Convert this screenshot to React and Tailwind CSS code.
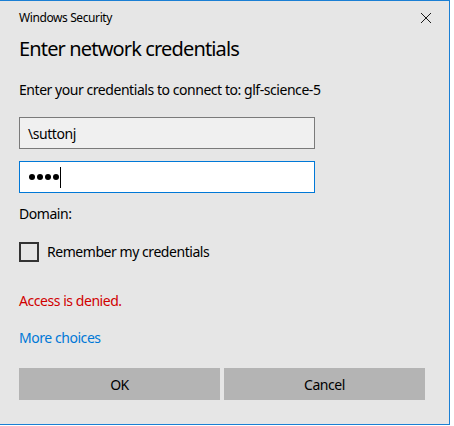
import React from 'react';

const font = { fontFamily: '"Noto Sans", "Open Sans", sans-serif' };

const CloseIcon = () => (
  <svg width="12" height="12" viewBox="0 0 12 12" className="block">
    <path d="M1 1 L11 11 M11 1 L1 11" stroke="#1a1a1a" strokeWidth="1" fill="none" />
  </svg>
);

export default function App() {
  return (
    <div className="w-[454px] h-[426px] bg-white" style={font}>
      <div className="w-[450px] h-[425px] bg-[#e6e6e6] border-t border-r border-b border-[#1a7fd4] flex flex-col pl-[19px] text-black tracking-[-0.45px]">
        <div className="h-[34px] flex items-center justify-between pr-[17px]">
          <span className="text-[12px] leading-[16px] tracking-[-0.4px]">Windows Security</span>
          <CloseIcon />
        </div>

        <h1 className="text-[20px] leading-[28px] font-normal tracking-[-0.85px]">Enter network credentials</h1>

        <p className="mt-[17px] text-[14px] leading-[20px]">
          Enter your credentials to connect to: glf-science-5
        </p>

        <div className="mt-[17px] w-[296px] h-[32px] border border-[#7a7a7a] bg-[#f0f0f0] flex items-center pl-[8px] text-[14px]">
          \suttonj
        </div>

        <div className="mt-[12px] w-[296px] h-[32px] border border-[#0078d7] bg-white flex items-center pl-[9px]">
          <div className="flex items-center gap-[2px]">
            <span className="w-[6px] h-[6px] rounded-full bg-black" />
            <span className="w-[6px] h-[6px] rounded-full bg-black" />
            <span className="w-[6px] h-[6px] rounded-full bg-black" />
            <span className="w-[6px] h-[6px] rounded-full bg-black" />
          </div>
          <span className="ml-[1px] w-[1px] h-[21px] bg-black" />
        </div>

        <p className="mt-[11px] text-[14px] leading-[20px]">Domain:</p>

        <label className="mt-[18px] flex items-center gap-[8px] text-[14px] leading-[20px]">
          <span className="w-[20px] h-[20px] border-2 border-[#333333] bg-[#e6e6e6]" />
          Remember my credentials
        </label>

        <p className="mt-[29px] text-[14px] leading-[20px] text-[#d10000]">Access is denied.</p>

        <p className="mt-[17px] text-[14px] leading-[20px] text-[#0078d7]">More choices</p>

        <div className="mt-[20px] flex gap-[4px]">
          <button className="w-[201px] h-[32px] bg-[#b4b4b4] text-[14px] text-black">OK</button>
          <button className="w-[201px] h-[32px] bg-[#b4b4b4] text-[14px] text-black">Cancel</button>
        </div>
      </div>
    </div>
  );
}
